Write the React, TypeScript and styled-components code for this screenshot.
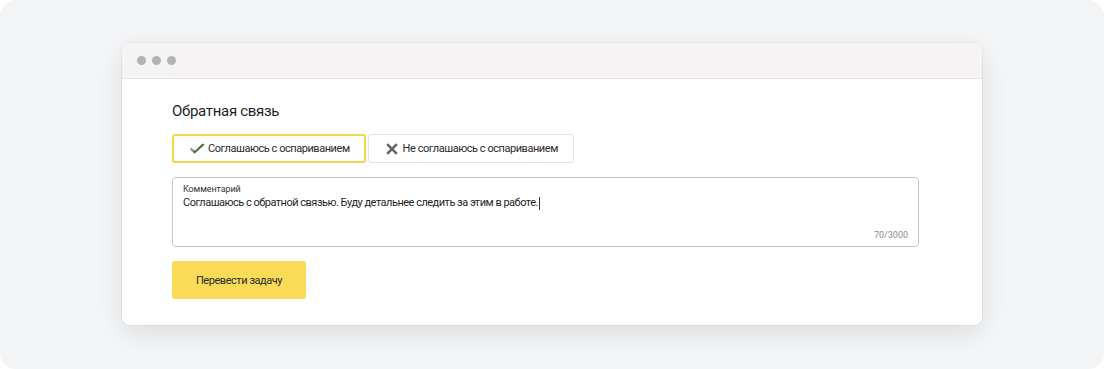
import { createGlobalStyle, styled } from 'styled-components';

const GlobalStyle = createGlobalStyle`
  html, body {
    margin: 0;
    padding: 0;
    background: #ffffff;
  }
  body {
    font-family: Roboto, "Liberation Sans", sans-serif;
    color: #1f1f1f;
  }
  * {
    box-sizing: border-box;
  }
`;

const CheckIcon = () => (
  <svg width="16" height="12" viewBox="0 0 16 12">
    <path d="M0.5 6.2 L2.2 4.8 L6.2 7.6 L5.4 10.8 Z" fill="#9b9b9b" />
    <path d="M5.4 10.8 L4.2 7.2 L5.8 7.9 L13.6 0.6 L15.6 1.8 Z" fill="#4b6a36" />
  </svg>
);

const CrossIcon = () => (
  <svg width="12" height="12" viewBox="0 0 12 12">
    <path d="M1.2 1.2 L10.8 10.8 M10.8 1.2 L1.2 10.8" stroke="#666666" strokeWidth="2.6" />
  </svg>
);

const App = () => {
  return (
    <>
      <GlobalStyle />
      <S.Page>
        <S.Window>
          <S.TitleBar>
            <S.Dot />
            <S.Dot />
            <S.Dot />
          </S.TitleBar>
          <S.Content>
            <S.Title>Обратная связь</S.Title>
            <S.Choices>
              <S.Choice $active>
                <CheckIcon />
                Соглашаюсь с оспариванием
              </S.Choice>
              <S.Choice>
                <CrossIcon />
                Не соглашаюсь с оспариванием
              </S.Choice>
            </S.Choices>
            <S.Field>
              <S.Label>Комментарий</S.Label>
              <S.Value>
                Соглашаюсь с обратной связью. Буду детальнее следить за этим в работе.
                <S.Caret />
              </S.Value>
              <S.Counter>70/3000</S.Counter>
            </S.Field>
            <S.Submit>Перевести задачу</S.Submit>
          </S.Content>
        </S.Window>
      </S.Page>
    </>
  );
};

export default App;

const S = {
  Page: styled.div`
    width: 1104px;
    height: 369px;
    border-radius: 16px;
    background: #f4f5f7;
    padding: 43px 122px 0;
    overflow: hidden;
  `,

  Window: styled.div`
    width: 860px;
    height: 282px;
    border-radius: 8px;
    background: #ffffff;
    overflow: hidden;
    box-shadow: 0 8px 28px rgba(0, 0, 0, 0.1), 0 0 0 1px rgba(0, 0, 0, 0.04);
    display: flex;
    flex-direction: column;
  `,

  TitleBar: styled.div`
    height: 36px;
    flex-shrink: 0;
    background: #f5f3f4;
    border-bottom: 1px solid #e4e2e3;
    display: flex;
    align-items: center;
    gap: 6px;
    padding: 0 0 0 15px;
  `,

  Dot: styled.span`
    width: 9px;
    height: 9px;
    border-radius: 50%;
    background: #b3b3b3;
  `,

  Content: styled.div`
    padding: 21px 63px 0 50px;
    display: flex;
    flex-direction: column;
    align-items: flex-start;
  `,

  Title: styled.h2`
    margin: 0;
    font-size: 15px;
    font-weight: 400;
    letter-spacing: -0.3px;
    line-height: 22px;
    color: #1f1f1f;
  `,

  Choices: styled.div`
    display: flex;
    gap: 2px;
    margin-top: 12px;
  `,

  Choice: styled.button<{ $active?: boolean }>`
    height: 29px;
    padding: 0 ${(p) => (p.$active ? '14px 0 15px' : '15px 0 17px')};
    display: flex;
    align-items: center;
    gap: ${(p) => (p.$active ? '3px' : '5px')};
    font-family: inherit;
    font-size: 11px;
    letter-spacing: -0.45px;
    color: #2a2a2a;
    background: #ffffff;
    border: ${(p) => (p.$active ? '2px solid #f4d64a' : '1px solid #e1e1e1')};
    border-radius: 3px;
    cursor: pointer;
  `,

  Field: styled.div`
    margin-top: 14px;
    width: 747px;
    height: 70px;
    border: 1px solid #c6c6c6;
    border-radius: 4px;
    padding: 5px 10px 0;
    display: flex;
    flex-direction: column;
  `,

  Label: styled.div`
    font-size: 9px;
    line-height: 12px;
    letter-spacing: -0.1px;
    color: #333333;
  `,

  Value: styled.div`
    font-size: 11px;
    letter-spacing: -0.5px;
    line-height: 16px;
    color: #1f1f1f;
    display: flex;
    align-items: center;
  `,

  Caret: styled.span`
    width: 1px;
    height: 13px;
    margin-left: 1px;
    background: #333333;
  `,

  Counter: styled.div`
    margin-top: auto;
    margin-bottom: 5px;
    align-self: flex-end;
    font-size: 9px;
    line-height: 12px;
    color: #8a8a8a;
  `,

  Submit: styled.button`
    margin-top: 14px;
    width: 134px;
    height: 38px;
    border: none;
    border-radius: 3px;
    background: #fadb55;
    font-family: inherit;
    font-size: 11px;
    letter-spacing: -0.45px;
    color: #2a2a2a;
    cursor: pointer;
  `,
};
